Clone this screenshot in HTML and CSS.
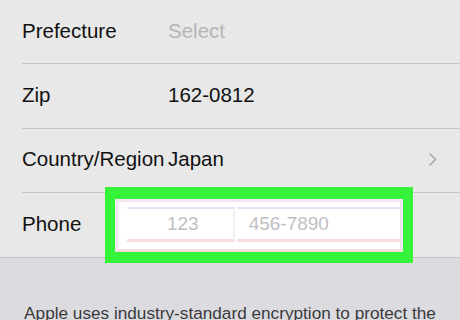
FILE: index.html
```html
<!DOCTYPE html>
<html lang="en">
<head>
    <meta charset="UTF-8">
    <meta name="viewport" content="width=device-width, initial-scale=1.0">
    <title>Shipping Address</title>
    <link rel="stylesheet" href="styles.css">
</head>
<body>
    <main class="form">
        <div class="row">
            <span class="label">Prefecture</span>
            <span class="value placeholder">Select</span>
        </div>
        <div class="row">
            <span class="label">Zip</span>
            <span class="value">162-0812</span>
        </div>
        <div class="row">
            <span class="label">Country/Region</span>
            <span class="value">Japan</span>
            <span class="chevron">
                <svg width="9" height="15" viewBox="0 0 9 15"><path d="M1.5 1.5 L7.5 7.5 L1.5 13.5" fill="none" stroke="#a9a9ad" stroke-width="1.6"/></svg>
            </span>
        </div>
        <div class="row row-last">
            <span class="label">Phone</span>
            <div class="highlight">
                <div class="phone-box">
                    <span class="field field-area">123</span>
                    <span class="field field-number">456-7890</span>
                </div>
            </div>
        </div>
    </main>

    <footer>
        <p>Apple uses industry-standard encryption to protect the confidentiality of your personal information.</p>
    </footer>
</body>
</html>
```

FILE: styles.css
```css
body {
    font-family: "Liberation Sans", Arial, sans-serif;
    margin: 0;
    padding: 0;
    background-color: #dcdce0;
    overflow: hidden;
}
.form {
    background-color: #e8e8e8;
}
.row {
    display: flex;
    align-items: center;
    box-sizing: border-box;
    height: 64.4px;
    padding-bottom: 2px;
    margin-left: 22px;
    border-bottom: 1px solid #c6c6c8;
    font-size: 20.5px;
    color: #111;
}
.row-last {
    margin-left: 0;
    padding-left: 22px;
    position: relative;
}
.label {
    width: 146px;
    flex-shrink: 0;
}
.value {
    flex: 1;
}
.placeholder {
    color: #b4b4b6;
}
.chevron {
    margin-right: 23px;
    display: flex;
}
.highlight {
    position: absolute;
    left: 105px;
    top: -6px;
    width: 288px;
    height: 53px;
    border-style: solid;
    border-color: #36f43a;
    border-width: 12px 10px 11px 10px;
}
.phone-box {
    box-sizing: border-box;
    height: 100%;
    background-color: #fff;
    border: 3px solid #f3e6f3;
    border-bottom-color: #f8dcdc;
    padding: 5px 0 7px 9px;
    display: flex;
}
.field {
    background-color: #fff;
    color: #c0c0c2;
    font-size: 19px;
    display: flex;
    align-items: center;
    justify-content: center;
    border-top: 2px solid #e6e2f6;
    border-bottom: 3px solid #f6dede;
}
.field-area {
    width: 110px;
    padding-left: 6px;
    box-sizing: border-box;
    border-right: 2px solid #f0f0f0;
}
.field-number {
    width: 155px;
    margin-left: 2px;
    justify-content: flex-start;
    padding-left: 12px;
}
footer {
    padding: 44px 0 0;
}
footer p {
    margin: 0 auto;
    width: 444px;
    text-align: center;
    font-size: 17.2px;
    color: #3a3a3c;
    line-height: 22px;
}
```
